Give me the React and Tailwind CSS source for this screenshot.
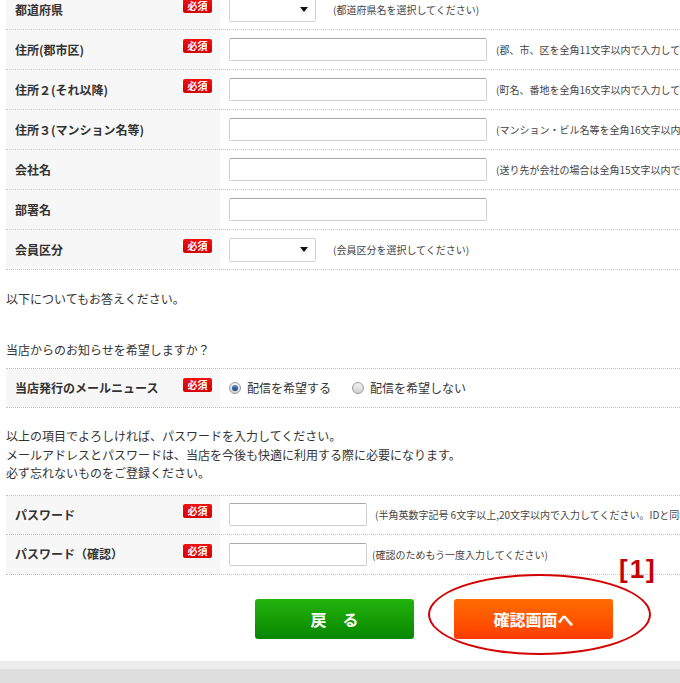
import React from "react";

const rows = [
  { label: "都道府県", required: true, type: "select", hint: "(都道府県名を選択してください)" },
  { label: "住所(郡市区)", required: true, type: "input", hint: "(郡、市、区を全角11文字以内で入力してください)" },
  { label: "住所２(それ以降)", required: true, type: "input", hint: "(町名、番地を全角16文字以内で入力してください)" },
  { label: "住所３(マンション名等)", required: false, type: "input", hint: "(マンション・ビル名等を全角16文字以内で入力してください)" },
  { label: "会社名", required: false, type: "input", hint: "(送り先が会社の場合は全角15文字以内で記入してください)" },
  { label: "部署名", required: false, type: "input", hint: "" },
  { label: "会員区分", required: true, type: "select", hint: "(会員区分を選択してください)" },
];

function Badge() {
  return (
    <span className="mb-[7px] w-[29px] h-[14px] rounded-[2px] bg-gradient-to-b from-[#f01010] to-[#d40000] text-white text-[10px] font-bold leading-[14px] text-center">
      必須
    </span>
  );
}

function Select() {
  return (
    <div className="w-[87px] h-[24px] border border-[#d4d4d4] rounded-[2px] bg-white flex items-center justify-end pr-[7px]">
      <svg width="8" height="5" viewBox="0 0 8 5">
        <path d="M0 0 L8 0 L4 5 Z" fill="#111" />
      </svg>
    </div>
  );
}

function TextInput({ w = "w-[258px]" }) {
  return (
    <div className={`${w} h-[23px] border border-[#cfcfcf] border-t-[#a8a8a8] rounded-[2px] bg-white`} />
  );
}

function Row({ label, required, children, top = false }) {
  return (
    <div
      className={`flex h-[40px] border-b border-dotted border-[#c4c4c4] ${
        top ? "border-t" : ""
      }`}
    >
      <div className="w-[214px] shrink-0 bg-[#f7f7f7] flex items-center justify-between pl-[9px] pr-[8px]">
        <span className="text-[12px] font-bold text-[#333]">{label}</span>
        {required && <Badge />}
      </div>
      <div className="flex items-center pl-[9px] whitespace-nowrap">{children}</div>
    </div>
  );
}

function Radio({ checked }) {
  return (
    <span className="w-[12px] h-[12px] rounded-full border border-[#9a9a9a] bg-gradient-to-b from-[#f4f4f4] to-[#d0d0d0] flex items-center justify-center">
      {checked && (
        <span className="w-[6px] h-[6px] rounded-full bg-gradient-to-b from-[#5a8ad0] to-[#1c3f78]" />
      )}
    </span>
  );
}

export default function App() {
  return (
    <div
      className="relative w-[680px] h-[683px] overflow-hidden bg-white text-[#333]"
      style={{ fontFamily: '"Noto Sans CJK JP", "Noto Sans", sans-serif' }}
    >
      <div className="-mt-[10px] pl-[6px]">
        {/* 住所 */}
        {rows.map((r) => (
          <Row key={r.label} label={r.label} required={r.required}>
            {r.type === "select" ? <Select /> : <TextInput />}
            {r.hint && (
              <span
                className={`text-[10px] text-[#444] ${
                  r.type === "select" ? "ml-[17px]" : "ml-[9px]"
                }`}
              >
                {r.hint}
              </span>
            )}
          </Row>
        ))}

        <p className="mt-[19px] text-[12px] leading-[19px]">以下についてもお答えください。</p>
        <p className="mt-[32px] text-[12px] leading-[19px]">当店からのお知らせを希望しますか？</p>

        <div className="mt-[9px]">
          <Row label="当店発行のメールニュース" required top>
            <label className="flex items-center gap-[6px] text-[12px]">
              <Radio checked />
              配信を希望する
            </label>
            <label className="ml-[21px] flex items-center gap-[6px] text-[12px]">
              <Radio />
              配信を希望しない
            </label>
          </Row>
        </div>

        <div className="mt-[19px] text-[12px] leading-[18.5px]">
          <p>以上の項目でよろしければ、パスワードを入力してください。</p>
          <p>メールアドレスとパスワードは、当店を今後も快適に利用する際に必要になります。</p>
          <p>必ず忘れないものをご登録ください。</p>
        </div>

        <div className="mt-[12px]">
          <Row label="パスワード" required top>
            <TextInput w="w-[138px]" />
            <span className="ml-[8px] text-[10px] text-[#444]">
              (半角英数字記号 6文字以上,20文字以内で入力してください。IDと同様のパスワードは使用できません)
            </span>
          </Row>
          <Row label="パスワード（確認）" required>
            <TextInput w="w-[138px]" />
            <span className="ml-[5px] text-[10px] text-[#444]">
              (確認のためもう一度入力してください)
            </span>
          </Row>
        </div>

        <div className="mt-[24px] flex gap-[40px] pl-[249px]">
          <button className="w-[159px] h-[40px] rounded-[3px] bg-gradient-to-b from-[#22b40e] to-[#078600] text-white text-[16px] font-bold">
            戻　る
          </button>
          <button className="w-[159px] h-[40px] rounded-[3px] bg-gradient-to-b from-[#ff6c00] to-[#ff3a00] text-white text-[16px] font-bold">
            確認画面へ
          </button>
        </div>
      </div>

      {/* annotation */}
      <div className="absolute left-[428px] top-[574px] w-[223px] h-[81px] rounded-[50%] border-2 border-[#d40000]" />
      <div
        className="absolute left-[619px] top-[550px] text-[26px] font-bold text-[#c40000] tracking-[2px]"
        style={{ fontFamily: '"Liberation Sans", Arial, sans-serif' }}
      >
        [1]
      </div>

      {/* footer band */}
      <div className="absolute left-0 right-0 top-[661px] bottom-0 bg-[#dddddd]">
        <div className="h-[8px] bg-[#ececec]" />
      </div>
    </div>
  );
}
